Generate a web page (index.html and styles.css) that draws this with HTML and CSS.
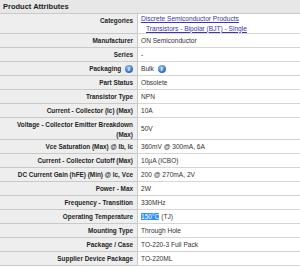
FILE: index.html
```html
<!DOCTYPE html>
<html lang="en">
<head>
    <meta charset="UTF-8">
    <title>Product Attributes</title>
    <link rel="stylesheet" href="styles.css">
</head>
<body>
    <div class="attrs">
        <div class="attrs-title">Product Attributes</div>
        <table class="attr-table">
            <tr>
                <th>Categories</th>
                <td class="links">
                    <a href="#">Discrete Semiconductor Products</a><br>
                    <a href="#" class="sub">Transistors - Bipolar (BJT) - Single</a>
                </td>
            </tr>
            <tr><th>Manufacturer</th><td>ON Semiconductor</td></tr>
            <tr><th>Series</th><td>-</td></tr>
            <tr>
                <th>Packaging <span class="info">i</span></th>
                <td>Bulk <span class="info">i</span></td>
            </tr>
            <tr><th>Part Status</th><td>Obsolete</td></tr>
            <tr><th>Transistor Type</th><td>NPN</td></tr>
            <tr><th>Current - Collector (Ic) (Max)</th><td>10A</td></tr>
            <tr><th>Voltage - Collector Emitter Breakdown (Max)</th><td>50V</td></tr>
            <tr><th>Vce Saturation (Max) @ Ib, Ic</th><td>360mV @ 300mA, 6A</td></tr>
            <tr><th>Current - Collector Cutoff (Max)</th><td>10µA (ICBO)</td></tr>
            <tr><th>DC Current Gain (hFE) (Min) @ Ic, Vce</th><td>200 @ 270mA, 2V</td></tr>
            <tr><th>Power - Max</th><td>2W</td></tr>
            <tr><th>Frequency - Transition</th><td>330MHz</td></tr>
            <tr><th>Operating Temperature</th><td><span class="selected">150°C</span> (TJ)</td></tr>
            <tr><th>Mounting Type</th><td>Through Hole</td></tr>
            <tr><th>Package / Case</th><td>TO-220-3 Full Pack</td></tr>
            <tr><th>Supplier Device Package</th><td>TO-220ML</td></tr>
        </table>
    </div>
</body>
</html>
```

FILE: styles.css
```css
:root {
    --head-bg: #e7e7e7;
    --label-bg: #eeeeee;
    --border: #c9c9c9;
    --border-light: #d6d6d6;
    --text: #1e1e1e;
    --value: #333333;
    --link: #3a35b0;
}

body {
    margin: 0;
    background: #ffffff;
    font-family: "Liberation Sans", Arial, sans-serif;
    color: var(--text);
}

.attrs {
    width: 300px;
}

.attrs-title {
    height: 13px;
    padding-left: 3px;
    background: var(--head-bg);
    border-bottom: 1px solid var(--border);
    font: bold 7.5px/13px "Liberation Sans", Arial, sans-serif;
}

.attr-table {
    width: 100%;
    border-collapse: collapse;
}

.attr-table tr {
    height: 14px;
}

.attr-table th,
.attr-table td {
    padding: 0;
    line-height: 9.5px;
    border-bottom: 1px solid var(--border);
}

.attr-table th {
    width: 133px;
    padding: 2px 4px 0 0;
    background: var(--label-bg);
    border-right: 1px solid var(--border);
    text-align: right;
    vertical-align: top;
    font: bold 6.4px/9.5px "Liberation Sans", Arial, sans-serif;
    color: var(--text);
}

.attr-table td {
    padding-left: 3px;
    vertical-align: middle;
    font-size: 6.6px;
    color: var(--value);
    border-bottom-color: var(--border-light);
}

.links a {
    color: var(--link);
    text-decoration: underline;
}

.links .sub {
    margin-left: 5px;
}

.info {
    display: inline-block;
    width: 8px;
    height: 8px;
    border-radius: 50%;
    background: radial-gradient(circle at 40% 30%, #9cc2ef, #2d6cc2 70%);
    color: #ffffff;
    font: italic bold 6.5px/8px "Liberation Serif", serif;
    text-align: center;
    vertical-align: middle;
    margin-left: 2px;
}

.selected {
    background: #3390ff;
    color: #ffffff;
}
```
